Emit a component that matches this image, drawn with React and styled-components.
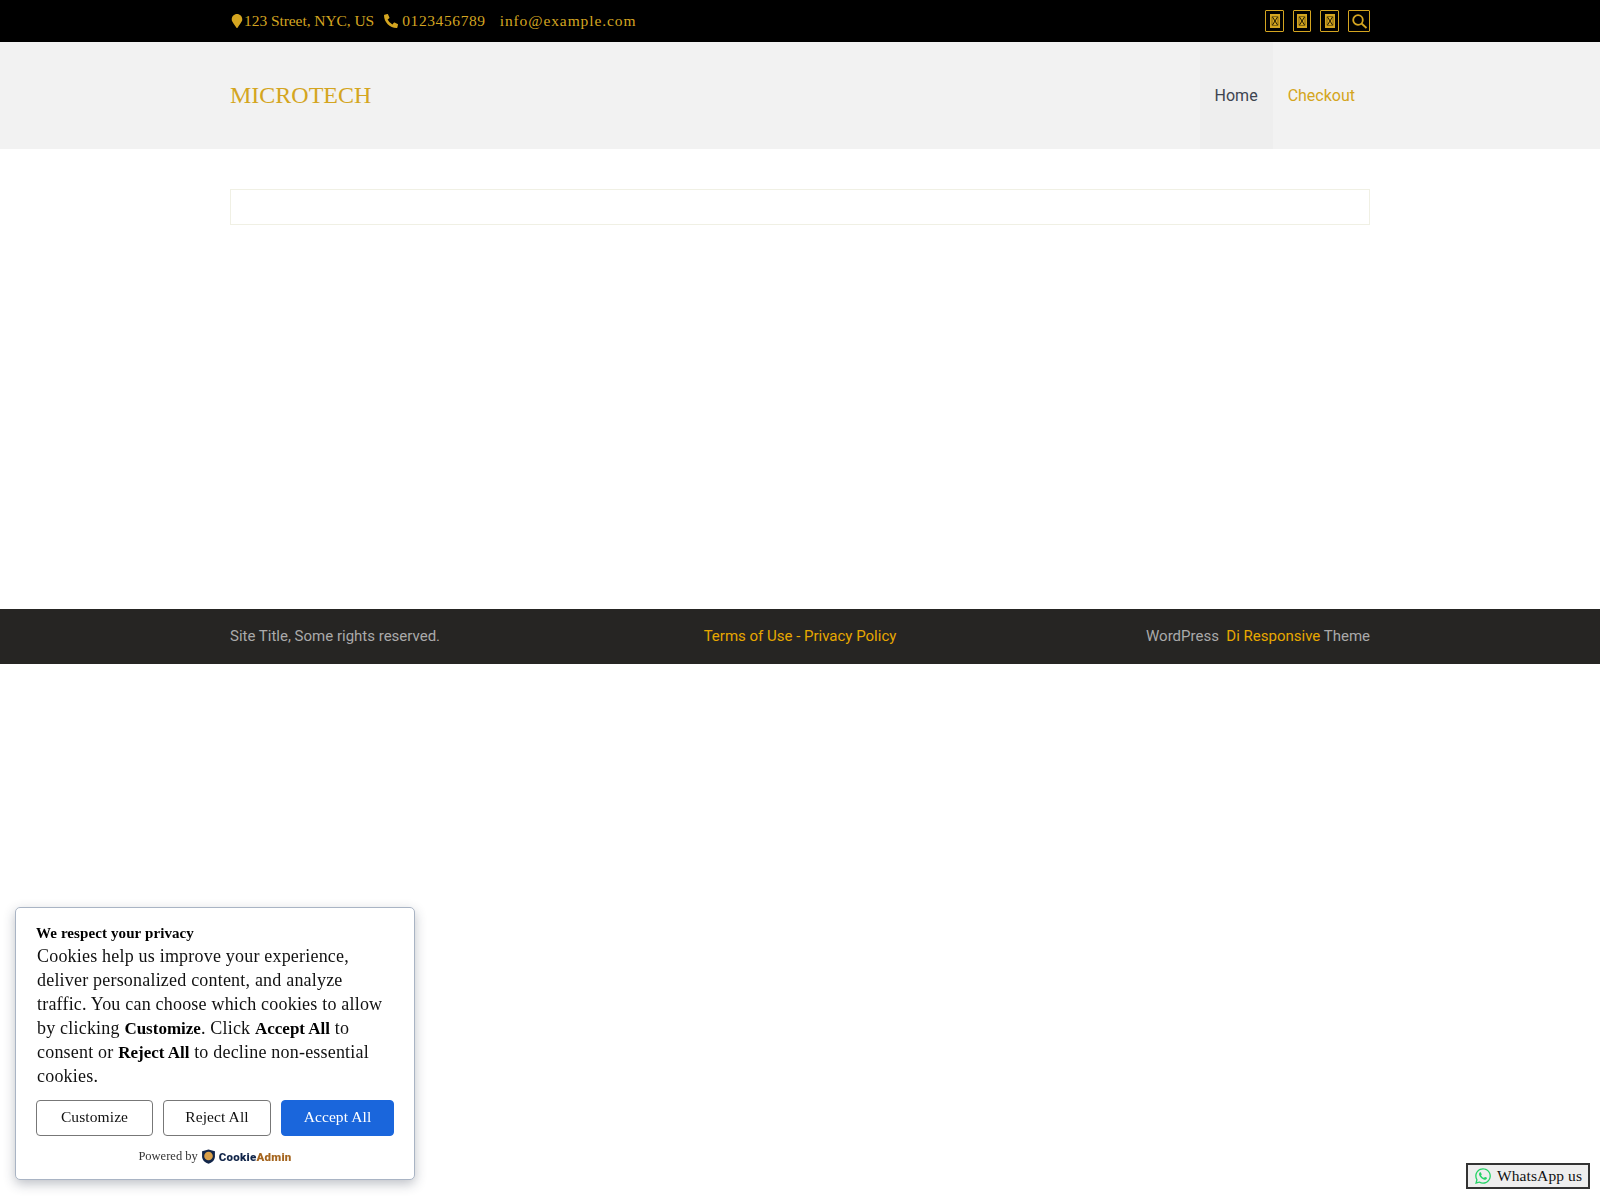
import React from "react";
import styled, { createGlobalStyle } from "styled-components";
import { FaMapMarker, FaPhoneAlt, FaWhatsapp } from "react-icons/fa";

const gold = "#d4a520";

const GlobalStyle = createGlobalStyle`
  html, body {
    margin: 0;
    padding: 0;
    background: #fff;
    font-family: "Roboto", sans-serif;
  }
  * {
    box-sizing: border-box;
  }
`;

const Container = styled.div`
  width: 1140px;
  margin: 0 auto;
  display: flex;
  align-items: center;
  justify-content: space-between;
  height: 100%;
`;

const TopBar = styled.div`
  height: 42px;
  background: #000;
`;

const Contact = styled.div`
  display: flex;
  align-items: center;
  color: ${gold};
  font-family: "Liberation Serif", serif;
  font-size: 15.5px;
`;

const ContactItem = styled.span`
  display: inline-flex;
  align-items: center;
  gap: ${props => props.$iconGap}px;
  margin-right: ${props => props.$gap}px;
  letter-spacing: ${props => props.$spacing}px;
`;

const Socials = styled.div`
  display: flex;
  gap: 9px;
`;

const SocialLink = styled.a`
  display: flex;
  align-items: center;
  justify-content: center;
  width: ${props => props.$width}px;
  height: 22px;
  border: 1px solid ${gold};
  border-radius: 1px;
  color: ${gold};
`;

const Header = styled.header`
  height: 107px;
  background: #f2f2f2;
`;

const Logo = styled.a`
  color: ${gold};
  font-family: "Liberation Serif", serif;
  font-size: 24px;
`;

const Nav = styled.nav`
  display: flex;
  height: 100%;
`;

const NavItem = styled.a`
  display: flex;
  align-items: center;
  padding: 0 15px;
  font-size: 16px;
  color: ${props => props.$active ? "#3d4450" : gold};
  background: ${props => props.$active ? "#eee" : "transparent"};
`;

const Main = styled.main`
  height: 460px;
  padding-top: 40px;
`;

const EmptyBox = styled.div`
  width: 1140px;
  height: 36px;
  margin: 0 auto;
  border: 1px solid #f0f0e4;
`;

const Footer = styled.footer`
  height: 55px;
  background: #262523;
  color: #aaa;
  font-size: 15px;
`;

const FooterRow = styled(Container)`
  display: grid;
  grid-template-columns: 1fr auto 1fr;
  padding-bottom: 2px;
`;

const FooterEnd = styled.span`
  justify-self: end;
`;

const FooterLink = styled.a`
  color: #e6a800;
`;

const CookieCard = styled.div`
  position: fixed;
  left: 15px;
  bottom: 20px;
  width: 400px;
  height: 273px;
  padding: 15px 20px 0 20px;
  background: #fff;
  border: 1px solid #a9b4c4;
  border-radius: 5px;
  box-shadow: 0 4px 12px rgba(40, 50, 70, 0.3);
  font-family: "Liberation Serif", serif;
  color: #111;
`;

const CookieTitle = styled.div`
  font-size: 15px;
  font-weight: 700;
  line-height: 21px;
  letter-spacing: 0.1px;
  color: #000;
`;

const CookieText = styled.p`
  max-width: 352px;
  margin: 0 0 0 1px;
  font-size: 18px;
  line-height: 24px;
  letter-spacing: 0.2px;

  b {
    color: #000;
    font-size: 17px;
    line-height: 1;
    letter-spacing: 0;
  }
`;

const CookieButtons = styled.div`
  display: flex;
  gap: 10px;
  margin-top: 12px;
`;

const CookieButton = styled.button`
  height: 36px;
  width: ${props => props.$width}px;
  border: 1px solid ${props => props.$primary ? "#1a66dc" : "#777"};
  border-radius: 4px;
  background: ${props => props.$primary ? "#1a66dc" : "#fff"};
  color: ${props => props.$primary ? "#fff" : "#111"};
  font-family: "Liberation Serif", serif;
  font-size: 15.5px;
  letter-spacing: 0.1px;
  padding: 0 0 2px;
`;

const PoweredBy = styled.div`
  display: flex;
  align-items: center;
  justify-content: center;
  gap: 3px;
  margin-top: 13px;
  font-size: 12.5px;
  color: #333;
`;

const BrandName = styled.span`
  font-family: "Roboto", sans-serif;
  font-size: 11.5px;
  font-weight: 900;
  letter-spacing: 0.25px;
  color: #12264a;

  em {
    font-style: normal;
    color: #a5651e;
  }
`;

const WhatsApp = styled.a`
  position: fixed;
  right: 10px;
  bottom: 11px;
  width: 124px;
  height: 26px;
  display: flex;
  align-items: center;
  gap: 5px;
  padding-left: 6px;
  background: #eee;
  border: 2px solid #333;
  font-family: "Liberation Serif", serif;
  font-size: 15.5px;
  letter-spacing: 0.1px;
  color: #111;
`;

const MissingGlyph = () => (
  <svg width="10" height="14" viewBox="0 0 10 14">
    <rect x="0" y="0" width="10" height="14" fill={gold} />
    <path d="M2 2.5h6v9H2z" fill="none" stroke="#6b5410" strokeWidth="0.8" />
    <path d="M2.5 3l5 8 M7.5 3l-5 8" fill="none" stroke="#1f1800" strokeWidth="1" />
  </svg>
);

const SearchGlyph = () => (
  <svg width="17" height="17" viewBox="0 0 17 17" fill="none" stroke="currentColor" strokeWidth="1.8">
    <circle cx="7" cy="7" r="4.8" />
    <path d="M10.5 10.5 L15.5 15" />
  </svg>
);

const Shield = () => (
  <svg width="15" height="15" viewBox="0 0 14 14">
    <path d="M7 0.5 L13 2.2 V7 C13 10.5 10 12.8 7 13.8 C4 12.8 1 10.5 1 7 V2.2 Z" fill="#12264a" />
    <circle cx="7" cy="6.6" r="4" fill="#d9a04a" />
  </svg>
);

export default function App() {
  return (
    <>
      <GlobalStyle />
      <TopBar>
        <Container>
          <Contact>
            <ContactItem $gap={10} $iconGap={0} $spacing={-0.06}><FaMapMarker size={14} />123 Street, NYC, US</ContactItem>
            <ContactItem $gap={14} $iconGap={4} $spacing={0.6}><FaPhoneAlt size={14} />0123456789</ContactItem>
            <ContactItem $gap={0} $iconGap={0} $spacing={0.9}>info@example.com</ContactItem>
          </Contact>
          <Socials>
            <SocialLink $width={19}><MissingGlyph /></SocialLink>
            <SocialLink $width={18}><MissingGlyph /></SocialLink>
            <SocialLink $width={19}><MissingGlyph /></SocialLink>
            <SocialLink $width={22}><SearchGlyph /></SocialLink>
          </Socials>
        </Container>
      </TopBar>
      <Header>
        <Container>
          <Logo>MICROTECH</Logo>
          <Nav>
            <NavItem $active>Home</NavItem>
            <NavItem>Checkout</NavItem>
          </Nav>
        </Container>
      </Header>
      <Main>
        <EmptyBox />
      </Main>
      <Footer>
        <FooterRow>
          <span>Site Title, Some rights reserved.</span>
          <span><FooterLink>Terms of Use - Privacy Policy</FooterLink></span>
          <FooterEnd>WordPress &nbsp;<FooterLink>Di Responsive</FooterLink> Theme</FooterEnd>
        </FooterRow>
      </Footer>
      <CookieCard>
        <CookieTitle>We respect your privacy</CookieTitle>
        <CookieText>
          Cookies help us improve your experience, deliver personalized content, and analyze traffic. You can choose which cookies to allow by clicking <b>Customize</b>. Click <b>Accept All</b> to consent or <b>Reject All</b> to decline non-essential cookies.
        </CookieText>
        <CookieButtons>
          <CookieButton $width={117}>Customize</CookieButton>
          <CookieButton $width={108}>Reject All</CookieButton>
          <CookieButton $width={113} $primary>Accept All</CookieButton>
        </CookieButtons>
        <PoweredBy>
          Powered by <Shield /><BrandName>Cookie<em>Admin</em></BrandName>
        </PoweredBy>
      </CookieCard>
      <WhatsApp><FaWhatsapp size={18} color="#25d366" />WhatsApp us</WhatsApp>
    </>
  );
}
